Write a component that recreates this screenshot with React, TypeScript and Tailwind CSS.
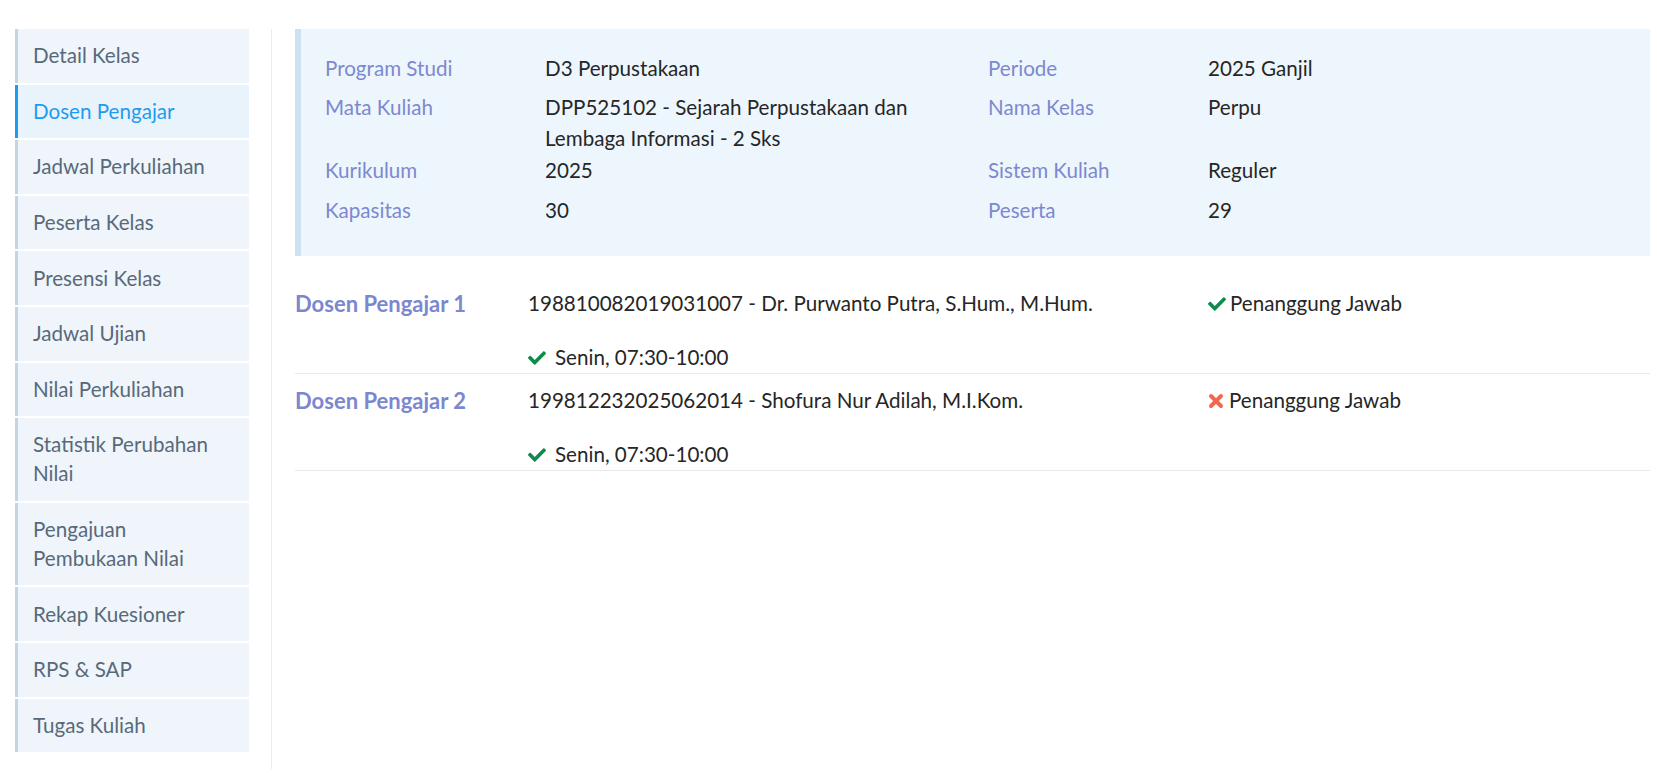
import React from 'react';
import { FaCheck } from 'react-icons/fa';

const menu = [
  'Detail Kelas',
  'Dosen Pengajar',
  'Jadwal Perkuliahan',
  'Peserta Kelas',
  'Presensi Kelas',
  'Jadwal Ujian',
  'Nilai Perkuliahan',
  'Statistik Perubahan Nilai',
  'Pengajuan Pembukaan Nilai',
  'Rekap Kuesioner',
  'RPS & SAP',
  'Tugas Kuliah',
];

const dosen = [
  { label: 'Dosen Pengajar 1', nama: '198810082019031007 - Dr. Purwanto Putra, S.Hum., M.Hum.', pj: true },
  { label: 'Dosen Pengajar 2', nama: '199812232025062014 - Shofura Nur Adilah, M.I.Kom.', pj: false },
];

function Cross() {
  return (
    <svg viewBox="0 0 16 16" className="w-[16px] h-[16px] mr-[5px]">
      <path d="M3 3 L13 13 M13 3 L3 13" stroke="#f2674f" strokeWidth="4" strokeLinecap="round" fill="none" />
    </svg>
  );
}

export default function App() {
  return (
    <div className="min-h-screen bg-white flex pl-[15px] pt-[29px] pr-[7px] text-[20.6px] text-[#262626]" style={{ fontFamily: 'Lato, "Noto Sans", sans-serif' }}>
      {/* Sidebar */}
      <div className="w-[234px] shrink-0 flex flex-col gap-[2px] self-start">
        {menu.map((item) => {
          const active = item === 'Dosen Pengajar';
          return (
            <div
              key={item}
              className={
                active
                  ? 'border-l-[3px] border-[#1b9cf0] bg-[#e9f3fc] text-[#1e9bf0] pl-[15px] pr-3 py-[12.3px] leading-[29px]'
                  : 'border-l-[3px] border-[#c6d4df] bg-[#eff5fa] text-[#58697a] pl-[15px] pr-3 py-[12.3px] leading-[29px]'
              }
            >
              {item === 'Statistik Perubahan Nilai' ? (
                <>Statistik Perubahan<br />Nilai</>
              ) : item === 'Pengajuan Pembukaan Nilai' ? (
                <>Pengajuan<br />Pembukaan Nilai</>
              ) : (
                item
              )}
            </div>
          );
        })}
      </div>

      {/* Main */}
      <div className="ml-[22px] border-l border-[#ececec] pl-[23px] flex-1 min-h-[740px] self-start">
        <div className="border-l-[6px] border-[#cde1f1] bg-[#eef6fd] pl-[24px] pt-[24px] pb-[30px]">
          <div className="grid grid-cols-[220px_443px_220px_1fr] grid-rows-[39px_63px_40px_31px] leading-[31px]">
            <div className="text-[#7c88d0]">Program Studi</div>
            <div>D3 Perpustakaan</div>
            <div className="text-[#7c88d0]">Periode</div>
            <div>2025 Ganjil</div>

            <div className="text-[#7c88d0]">Mata Kuliah</div>
            <div>DPP525102 - Sejarah Perpustakaan dan<br />Lembaga Informasi - 2 Sks</div>
            <div className="text-[#7c88d0]">Nama Kelas</div>
            <div>Perpu</div>

            <div className="text-[#7c88d0]">Kurikulum</div>
            <div>2025</div>
            <div className="text-[#7c88d0]">Sistem Kuliah</div>
            <div>Reguler</div>

            <div className="text-[#7c88d0]">Kapasitas</div>
            <div>30</div>
            <div className="text-[#7c88d0]">Peserta</div>
            <div>29</div>
          </div>
        </div>

        <div className="mt-[21px]">
          {dosen.map((d) => (
            <div key={d.label} className="grid grid-cols-[233px_680px_1fr] border-b border-[#e9e9e9] pt-[11px] leading-[31px]">
              <div className="font-bold text-[22px] text-[#7b87cf]">{d.label}</div>
              <div>
                <div>{d.nama}</div>
                <div className="mt-[23px] flex items-center">
                  <FaCheck className="w-[18px] h-[18px] text-[#0f8a4c] mr-[9px]" />
                  <span>Senin, 07:30-10:00</span>
                </div>
              </div>
              <div className="flex items-start">
                <div className="flex items-center">
                  {d.pj ? (
                    <FaCheck className="w-[18px] h-[18px] text-[#0f8a4c] mr-[4px]" />
                  ) : (
                    <Cross />
                  )}
                  <span>Penanggung Jawab</span>
                </div>
              </div>
            </div>
          ))}
        </div>
      </div>
    </div>
  );
}
